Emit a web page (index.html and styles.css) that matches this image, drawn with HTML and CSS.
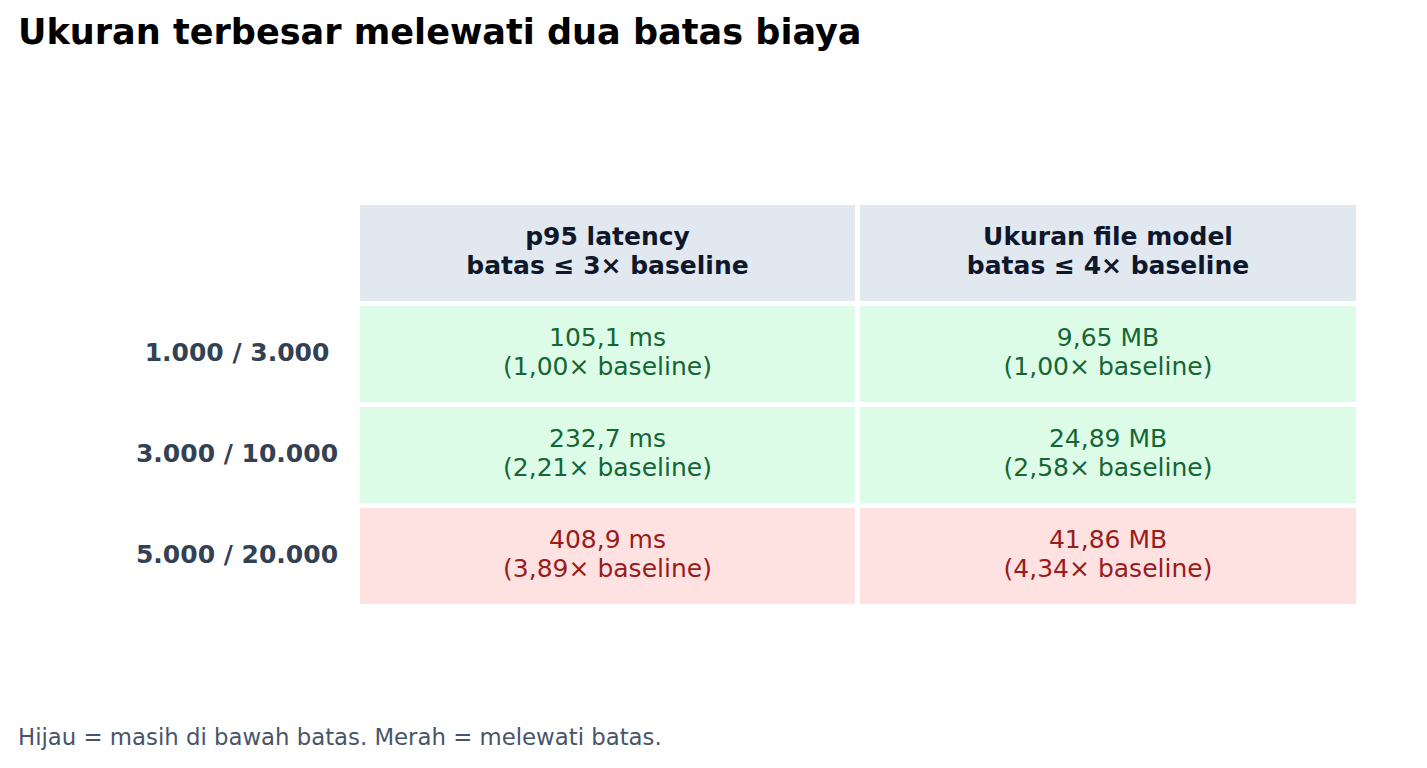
FILE: index.html
```html
<!DOCTYPE html>
<html lang="id">
<head>
<meta charset="utf-8">
<title>Ukuran terbesar melewati dua batas biaya</title>
<link rel="stylesheet" href="styles.css">
</head>
<body>
<main class="page">
  <h1 class="title">Ukuran terbesar melewati dua batas biaya</h1>
  <div class="table">
    <div class="corner"></div>
    <div class="cell head">p95 latency<br>batas ≤ 3× baseline</div>
    <div class="cell head">Ukuran file model<br>batas ≤ 4× baseline</div>

    <div class="label">1.000 / 3.000</div>
    <div class="cell ok">105,1 ms<br>(1,00× baseline)</div>
    <div class="cell ok">9,65 MB<br>(1,00× baseline)</div>

    <div class="label">3.000 / 10.000</div>
    <div class="cell ok">232,7 ms<br>(2,21× baseline)</div>
    <div class="cell ok">24,89 MB<br>(2,58× baseline)</div>

    <div class="label">5.000 / 20.000</div>
    <div class="cell bad">408,9 ms<br>(3,89× baseline)</div>
    <div class="cell bad">41,86 MB<br>(4,34× baseline)</div>
  </div>
  <p class="note">Hijau = masih di bawah batas. Merah = melewati batas.</p>
</main>
</body>
</html>
```

FILE: styles.css
```css
html, body {
  margin: 0;
  padding: 0;
  background: #ffffff;
}

.page {
  width: 1427px;
  height: 768px;
  font-family: "DejaVu Sans", "Liberation Sans", sans-serif;
  display: flex;
  flex-direction: column;
}

.title {
  margin: 12px 0 0 18px;
  font-size: 35.1px;
  line-height: 40px;
  font-weight: bold;
  color: #000000;
}

.table {
  margin-top: 153px;
  padding-left: 119px;
  display: grid;
  grid-template-columns: 236px 495px 496px;
  grid-auto-rows: 96px;
  column-gap: 5px;
  row-gap: 5px;
}

.label {
  display: flex;
  align-items: center;
  justify-content: center;
  padding-bottom: 4px;
  font-size: 25px;
  font-weight: bold;
  color: #334155;
}

.cell {
  display: flex;
  align-items: center;
  justify-content: center;
  text-align: center;
  padding-bottom: 4px;
  font-size: 25px;
  line-height: 29px;
}

.head {
  background: #e2e8f0;
  color: #0f172a;
  font-weight: bold;
}

.ok {
  background: #dcfce7;
  color: #166534;
}

.bad {
  background: #fee2e2;
  color: #991b1b;
}

.note {
  margin: 120px 0 0 18px;
  font-size: 22.8px;
  line-height: 26px;
  color: #475569;
}
```
